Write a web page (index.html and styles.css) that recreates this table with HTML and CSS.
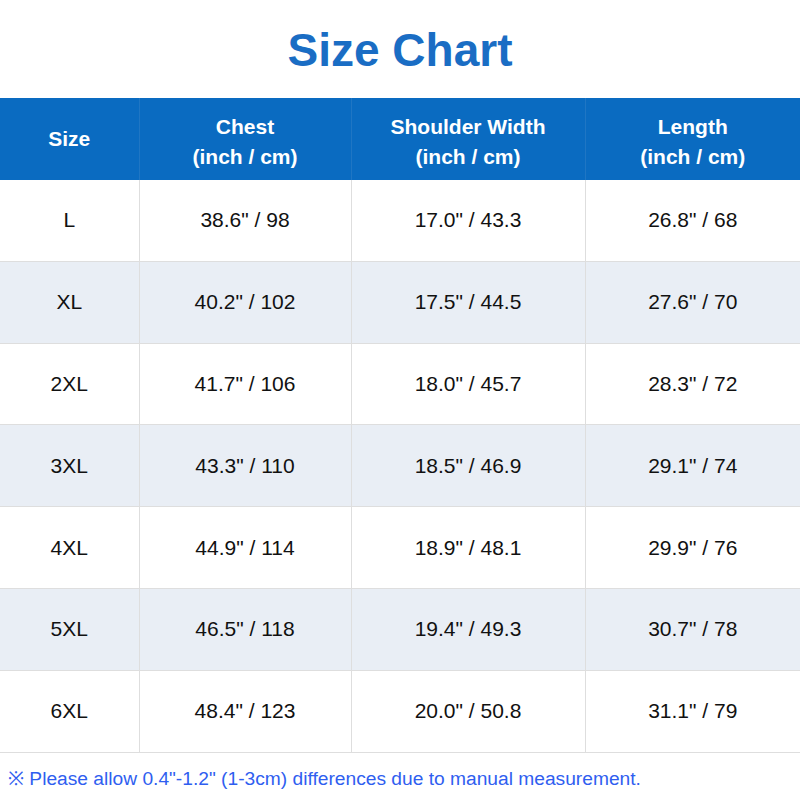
FILE: index.html
```html
<!DOCTYPE html>
<html>
<head>
<meta charset="utf-8">
<link rel="stylesheet" href="styles.css">
</head>
<body>
<div class="page">
  <h1 class="title">Size Chart</h1>
  <table class="chart">
    <colgroup>
      <col class="c1"><col class="c2"><col class="c3"><col class="c4">
    </colgroup>
    <thead>
      <tr>
        <th class="single">Size</th>
        <th>Chest<br>(inch / cm)</th>
        <th>Shoulder Width<br>(inch / cm)</th>
        <th>Length<br>(inch / cm)</th>
      </tr>
    </thead>
    <tbody>
      <tr><td>L</td><td>38.6" / 98</td><td>17.0" / 43.3</td><td>26.8" / 68</td></tr>
      <tr class="alt"><td>XL</td><td>40.2" / 102</td><td>17.5" / 44.5</td><td>27.6" / 70</td></tr>
      <tr><td>2XL</td><td>41.7" / 106</td><td>18.0" / 45.7</td><td>28.3" / 72</td></tr>
      <tr class="alt"><td>3XL</td><td>43.3" / 110</td><td>18.5" / 46.9</td><td>29.1" / 74</td></tr>
      <tr><td>4XL</td><td>44.9" / 114</td><td>18.9" / 48.1</td><td>29.9" / 76</td></tr>
      <tr class="alt"><td>5XL</td><td>46.5" / 118</td><td>19.4" / 49.3</td><td>30.7" / 78</td></tr>
      <tr><td>6XL</td><td>48.4" / 123</td><td>20.0" / 50.8</td><td>31.1" / 79</td></tr>
    </tbody>
  </table>
  <p class="note">※ Please allow 0.4"-1.2" (1-3cm) differences due to manual measurement.</p>
</div>
</body>
</html>
```
FILE: styles.css
```css
html, body {
  margin: 0;
  padding: 0;
  background: #ffffff;
}
.page {
  width: 800px;
  height: 800px;
  font-family: "Liberation Sans", Arial, sans-serif;
  overflow: hidden;
}
.title {
  margin: 0;
  height: 98px;
  display: flex;
  align-items: center;
  justify-content: center;
  font-size: 46px;
  font-weight: bold;
  color: #1a6dc4;
  padding-top: 2px;
  box-sizing: border-box;
}
.chart {
  width: 800px;
  border-collapse: collapse;
  table-layout: fixed;
}
.c1 { width: 139px; }
.c2 { width: 212px; }
.c3 { width: 234px; }
.c4 { width: 215px; }
.chart th {
  background: #0a6bc1;
  color: #ffffff;
  font-size: 21px;
  font-weight: bold;
  line-height: 30px;
  height: 82px;
  padding: 6px 0 0 0;
  box-sizing: border-box;
  border-left: 1px solid #1f76c4;
  text-align: center;
  vertical-align: middle;
}
.chart th.single {
  border-left: none;
  padding-top: 0;
}
.chart td {
  height: 80.8px;
  padding: 0;
  font-size: 21px;
  color: #111111;
  text-align: center;
  vertical-align: middle;
  border-left: 1px solid #dedede;
  border-bottom: 1px solid #dedede;
}
.chart td:first-child { border-left: none; }
.chart tr.alt td {
  background: #e9eef5;
}
.note {
  margin: 0;
  padding: 11px 0 0 8px;
  font-size: 19.2px;
  color: #2f5ef0;
  white-space: nowrap;
}
```
